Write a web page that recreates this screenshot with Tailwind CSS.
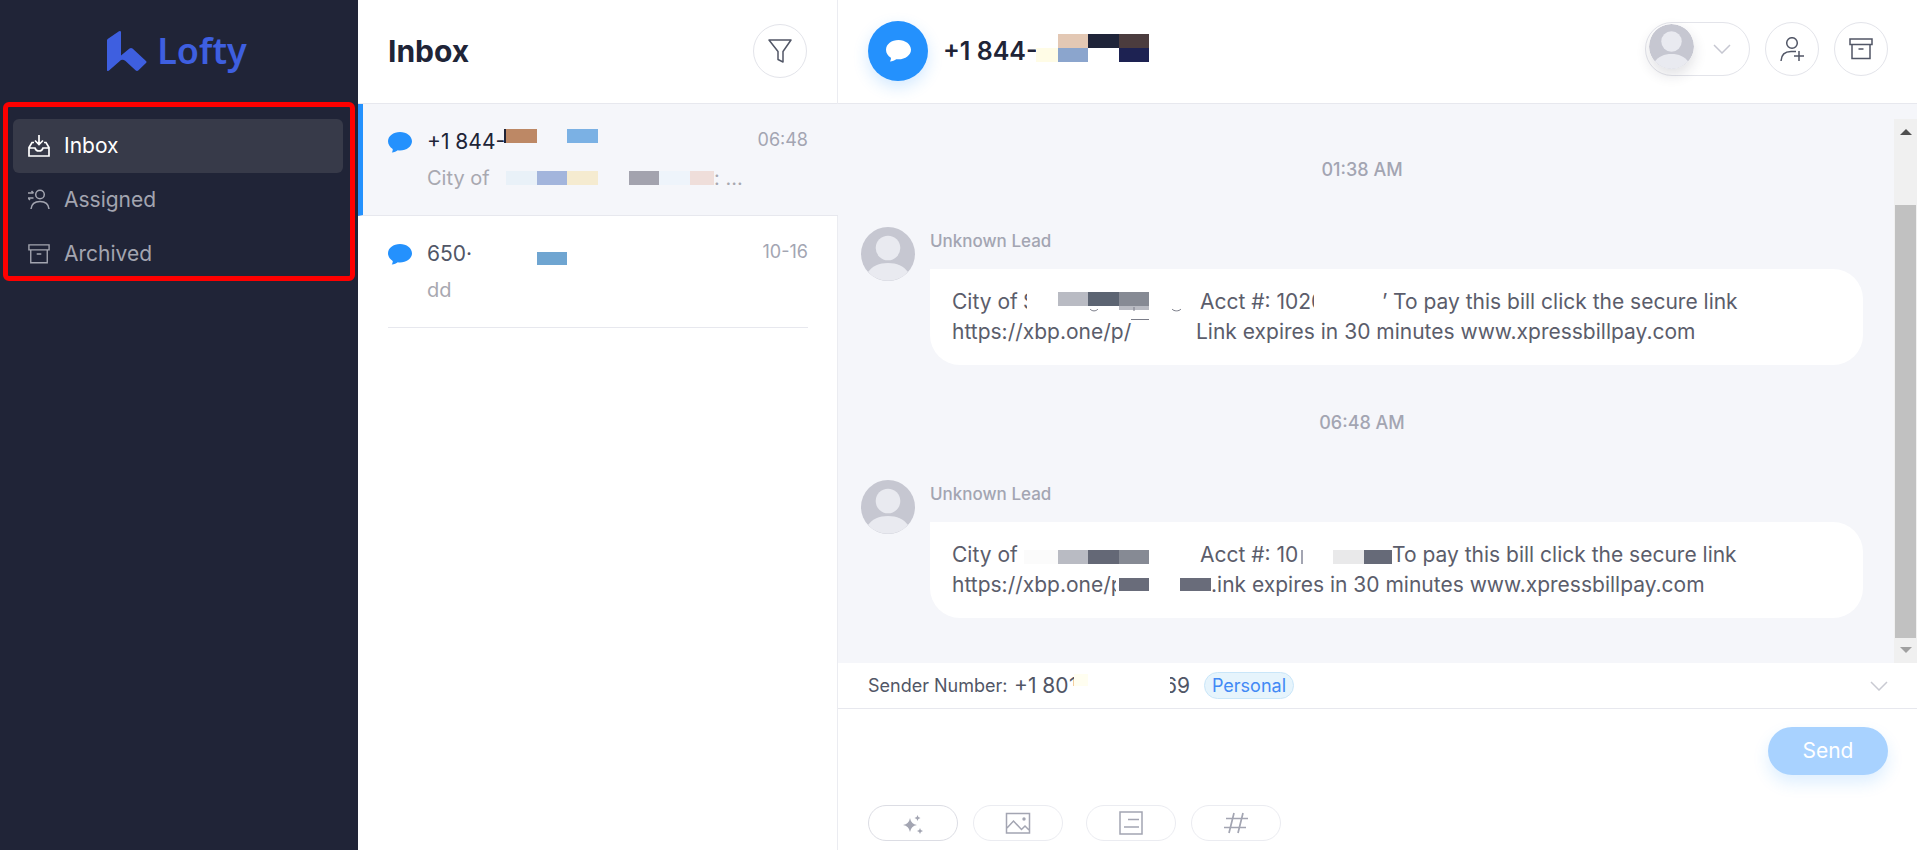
<!DOCTYPE html>
<html lang="en">
<head>
    <meta charset="UTF-8">
    <meta name="viewport" content="width=device-width, initial-scale=1.0">
    <title>Lofty Inbox</title>
    <script src="https://cdn.jsdelivr.net/npm/@tailwindcss/browser@4"></script>
</head>
<body class="flex h-screen overflow-hidden bg-white font-['Inter','Liberation_Sans',sans-serif] text-[21px] leading-[30px] text-[#515666]">

    <!-- Shared icons -->
    <svg class="hidden">
        <symbol id="bubble" viewBox="0 0 24 21">
            <path d="M12 0C5.400 0 0 4 0 9.300c0 3.200 1.900 5.900 4.700 7.600.2 1.300-.3 2.700-1 3.700 2.600-.3 4.700-1.200 6.100-2.300.7.100 1.500.2 2.200.2 6.600 0 12-4.100 12-9.200S18.600 0 12 0z" fill="currentColor"/>
        </symbol>
        <symbol id="archive" viewBox="0 0 24 24" fill="none" stroke="currentColor" stroke-width="1.500">
            <path d="M1 2h22v5.500H1zM3 7.500v14h18v-14M9.500 12h5"/>
        </symbol>
        <symbol id="avatar" viewBox="0 0 54 54">
            <circle cx="27" cy="27" r="27" fill="#c6c7d1"/>
            <circle cx="27" cy="21" r="12.300" fill="#e9eaf0"/>
            <path d="M7 45c4.500-6 11-9 20-9s15.500 3 20 9a27 27 0 0 1-40 0z" fill="#e9eaf0"/>
        </symbol>
        <symbol id="chevron" viewBox="0 0 18 10" fill="none" stroke="currentColor" stroke-width="1.500">
            <path d="M1 1l8 8 8-8"/>
        </symbol>
    </svg>

    <!-- Sidebar -->
    <aside class="flex w-[358px] shrink-0 flex-col bg-[#202437]">
        <a href="#" class="flex h-[103px] items-center justify-center gap-[10px] pb-[2px] pr-1 text-[#3e5fe0]">
            <svg class="h-10 w-10" viewBox="0 0 40 40" fill="currentColor">
                <path d="M0 9.500Q0 8.500 1 7.800L12 .3Q14 -.5 14 1.500V24.500L22.500 17.500Q24 16.500 25.500 17.500L39 30Q40 31 39 32L31.500 39.300Q30 40.500 28.500 39.300L18.500 30Q16 28 14 29L2 39.500Q0 41 0 39z"/>
            </svg>
            <span class="font-['Noto_Sans',sans-serif] text-[36px] leading-[40px] font-semibold">Lofty</span>
        </a>
        <nav class="mr-[3px] ml-[3px] -mt-px flex h-[179px] flex-col rounded-md border-[5px] border-[#fe0000] pt-3 pr-[7px] pl-[5px]">
            <a href="#" class="flex h-[54px] shrink-0 items-center gap-[14px] rounded-md bg-[#373a49] pb-px pl-[15px] text-white">
                <svg class="h-[22px] w-[22px]" viewBox="0 0 22 22" fill="none" stroke="currentColor" stroke-width="1.700">
                    <path d="M11 0v9M7 5.500l4 4 4-4M6 7.500H4L1 12.500V21h20v-8.500l-3-5h-2M1 13h6c.5 2 2 3 4 3s3.500-1 4-3h6"/>
                </svg>
                Inbox
            </a>
            <a href="#" class="flex h-[54px] shrink-0 items-center gap-[14px] pb-px pl-[15px] text-[#a3a5b0]">
                <svg class="h-[22px] w-[22px]" viewBox="0 0 22 22" fill="none" stroke="currentColor" stroke-width="1.500">
                    <circle cx="12" cy="5.500" r="4.300"/>
                    <path d="M3 20c.5-5 4-7.500 9-7.500s8.500 2.500 9 7.500M0 4h5.500M0 9h5.500M3.500 2l2 2M0 9l2 2"/>
                </svg>
                Assigned
            </a>
            <a href="#" class="flex h-[54px] shrink-0 items-center gap-[14px] pb-px pl-[15px] text-[#a3a5b0]">
                <svg class="h-[22px] w-[22px]"><use href="#archive"/></svg>
                Archived
            </a>
        </nav>
    </aside>

    <!-- Conversation list -->
    <section class="flex w-[480px] shrink-0 flex-col border-r border-[#ebecf1]">
        <header class="flex h-[104px] items-center justify-between border-b border-[#e7e8ee] pr-[30px] pb-[2px] pl-[30px]">
            <h1 class="text-[30px] font-bold text-[#202437]">Inbox</h1>
            <button type="button" aria-label="Filter" class="flex h-[54px] w-[54px] items-center justify-center rounded-full border border-[#e3e4ea] text-[#515666]">
                <svg class="h-6 w-6" viewBox="0 0 24 24" fill="none" stroke="currentColor" stroke-width="1.500" stroke-linejoin="round">
                    <path d="M1 1h22l-8 11.500V23l-5-2.500v-8z"/>
                </svg>
            </button>
        </header>

        <a href="#" class="-mr-px flex h-[112px] border-b border-l-[5px] border-b-[#e7e8ee] border-l-[#2491fd] bg-[#f5f6fa] pr-[30px] pl-[25px]">
            <svg class="mt-7 h-[21px] w-6 shrink-0 text-[#2491fd]"><use href="#bubble"/></svg>
            <div class="ml-[15px] flex-1 pt-[23px]">
                <div class="flex h-[30px] justify-between">
                    <div class="flex">
                        <span class="w-[77px] whitespace-nowrap text-[#202437]">+1 844-</span>
                        <span class="mt-[2px] h-[14px] w-[2px] bg-[#202437]"></span>
                        <span class="mt-[2px] h-[14px] w-[31px] bg-[#bd8865]"></span>
                        <span class="mt-[2px] ml-[30px] h-[14px] w-[31px] bg-[#7bb1e4]"></span>
                    </div>
                    <time class="text-[18px] leading-[26px] text-[#a3a5b2]">06:48</time>
                </div>
                <div class="mt-[6px] flex h-[30px] items-center text-[20px] text-[#a8a8b0]">
                    <span class="w-[79px]">City of</span>
                    <span class="flex h-[14px]">
                        <span class="w-[31px] bg-[#e9f1f8]"></span>
                        <span class="w-[30px] bg-[#a3b5dc]"></span>
                        <span class="w-[31px] bg-[#f5ebd0]"></span>
                        <span class="ml-[31px] w-[30px] bg-[#a3a3ae]"></span>
                        <span class="w-[31px] bg-[#eef4fb]"></span>
                        <span class="w-[24px] bg-[#efdeda]"></span>
                    </span>
                    <span>: ...</span>
                </div>
            </div>
        </a>

        <a href="#" class="mr-[29px] ml-[30px] flex h-[112px] border-b border-[#e7e8ee]">
            <svg class="mt-7 h-[21px] w-6 shrink-0 text-[#2491fd]"><use href="#bubble"/></svg>
            <div class="ml-[15px] flex-1 pt-[23px]">
                <div class="flex h-[30px] justify-between">
                    <div class="flex">
                        <span class="w-[45px] whitespace-nowrap">650·</span>
                        <span class="mt-[13px] ml-[65px] h-[13px] w-[30px] bg-[#6fa5d1]"></span>
                    </div>
                    <time class="text-[18px] leading-[26px] text-[#a3a5b2]">10-16</time>
                </div>
                <p class="mt-[6px] text-[20px] text-[#a8a8b0]">dd</p>
            </div>
        </a>
    </section>

    <!-- Conversation -->
    <main class="flex min-w-0 flex-1 flex-col">
        <header class="flex h-[104px] shrink-0 items-center border-b border-[#e7e8ee] pr-[29px] pb-[2px] pl-[30px]">
            <div class="flex h-[60px] w-[60px] items-center justify-center rounded-full bg-[#2491fd] text-white shadow-[0_6px_16px_rgba(36,145,253,0.2)]">
                <svg class="h-[22px] w-[25px]"><use href="#bubble"/></svg>
            </div>
            <h2 class="ml-[15px] w-[93px] text-[25px] font-semibold whitespace-nowrap text-[#202437]">+1 844-</h2>
            <div class="mb-[5px] grid grid-cols-[22px_30px_31px_30px] grid-rows-[14px_14px]">
                <span></span>
                <span class="bg-[#e3c8b4]"></span>
                <span class="bg-[#1f2439]"></span>
                <span class="bg-[#4b3c3e]"></span>
                <span class="bg-[#fffce6]"></span>
                <span class="bg-[#8ba5cd]"></span>
                <span></span>
                <span class="bg-[#1d2252]"></span>
            </div>
            <div class="mb-1 ml-auto flex gap-[15px] text-[#515666]">
                <button type="button" aria-label="Assignee" class="flex h-[54px] w-[105px] items-center gap-[19px] rounded-full border border-[#e3e4ea] pl-[3px]">
                    <svg class="mb-1 h-[45px] w-[45px] rounded-full shadow-[0_6px_14px_rgba(32,36,55,0.14)]"><use href="#avatar"/></svg>
                    <svg class="h-[10px] w-[18px] text-[#c6c7d1]"><use href="#chevron"/></svg>
                </button>
                <button type="button" aria-label="Add contact" class="flex h-[54px] w-[54px] items-center justify-center rounded-full border border-[#e3e4ea]">
                    <svg class="h-6 w-6" viewBox="0 0 24 24" fill="none" stroke="currentColor" stroke-width="1.500">
                        <circle cx="12" cy="6" r="5.300"/>
                        <path d="M1 24c.3-6 4-9.500 10-9.500h5M19 14v10M14 19h10"/>
                    </svg>
                </button>
                <button type="button" aria-label="Archive" class="flex h-[54px] w-[54px] items-center justify-center rounded-full border border-[#e3e4ea]">
                    <svg class="h-6 w-6"><use href="#archive"/></svg>
                </button>
            </div>
        </header>

        <div class="flex min-h-0 flex-1 bg-[#f5f6fa]">
            <div class="min-w-0 flex-1 overflow-hidden pr-[31px] pl-[23px] text-[#5b5d6b]">
                <p class="mt-[51px] h-[30px] text-center text-[18px] font-medium text-[#a3a5b2]">01:38 AM</p>
                <article class="mt-[42px] flex gap-[15px]">
                    <svg class="h-[54px] w-[54px] shrink-0"><use href="#avatar"/></svg>
                    <div class="flex-1">
                        <h3 class="h-[42px] text-[17px] leading-[28px] font-medium text-[#a3a5b2]">Unknown Lead</h3>
                        <div class="rounded-[30px] rounded-tl-none bg-white px-[22px] py-[18px] whitespace-nowrap">
                            <div class="flex h-[30px]">
                                <span class="w-[71px]">City of</span>
                                <span class="w-1 overflow-hidden">S</span>
                                <span class="relative ml-[31px] flex h-[19px] w-[142px] pt-[5px]">
                                    <span class="w-[30px] bg-[#b9bbc3]"></span>
                                    <span class="w-[31px] bg-[#5c6472]"></span>
                                    <span class="w-[30px] bg-[#868a94]"></span>
                                    <!-- Leftovers under the masked name -->
                                    <svg class="absolute top-[19px] left-0 h-[15px] w-[130px]" viewBox="0 0 130 15">
                                        <path d="M61 0h30v4H61z" fill="#b9bbc3"/>
                                        <path d="M32 3c2 2.500 6 2.500 8 0M76 1v4M114 3c2 2.500 7 2.500 9 0M73 13.500h18" fill="none" stroke="#7b7d89"/>
                                    </svg>
                                </span>
                                <span class="w-[111px]">Acct #: 102</span>
                                <span class="w-[3px] overflow-hidden">0</span>
                                <span class="ml-[68px] h-3 w-[5px] overflow-hidden text-right">’</span>
                                <span class="ml-[6px]">To pay this bill click the secure link</span>
                            </div>
                            <div class="flex h-[30px]">
                                <span class="w-[244px]">https://xbp.one/p/</span>
                                <span>Link expires in 30 minutes www.xpressbillpay.com</span>
                            </div>
                        </div>
                    </div>
                </article>

                <p class="mt-[43px] h-[30px] text-center text-[18px] font-medium text-[#a3a5b2]">06:48 AM</p>
                <article class="mt-[42px] flex gap-[15px]">
                    <svg class="h-[54px] w-[54px] shrink-0"><use href="#avatar"/></svg>
                    <div class="flex-1">
                        <h3 class="h-[42px] text-[17px] leading-[28px] font-medium text-[#a3a5b2]">Unknown Lead</h3>
                        <div class="rounded-[30px] rounded-tl-none bg-white px-[22px] py-[18px] whitespace-nowrap">
                            <div class="flex h-[30px]">
                                <span class="w-[72px]">City of</span>
                                <span class="mt-[10px] flex h-[14px] w-[176px]">
                                    <span class="w-[34px] bg-[#fbfbfb]"></span>
                                    <span class="w-[30px] bg-[#b9bbc3]"></span>
                                    <span class="w-[31px] bg-[#646876]"></span>
                                    <span class="w-[30px] bg-[#868a94]"></span>
                                </span>
                                <span class="w-[101px]">Acct #: 10</span>
                                <span class="mt-[10px] h-[14px] w-[2px] bg-[#a3a5b2]"></span>
                                <span class="mt-[10px] ml-[30px] h-[14px] w-[31px] bg-[#e9e9ea]"></span>
                                <span class="mt-[10px] h-[14px] w-[28px] bg-[#666a78]"></span>
                                <span>To pay this bill click the secure link</span>
                            </div>
                            <div class="flex h-[30px]">
                                <span class="w-[164px] overflow-hidden">https://xbp.one/p</span>
                                <span class="mt-[8px] ml-[3px] h-[13px] w-[30px] bg-[#696c7a]"></span>
                                <span class="mt-[8px] ml-[31px] h-[13px] w-[31px] bg-[#696c7a]"></span>
                                <span>.ink expires in 30 minutes www.xpressbillpay.com</span>
                            </div>
                        </div>
                    </div>
                </article>
            </div>
            <!-- Scrollbar -->
            <div class="mt-[15px] flex w-[23px] shrink-0 flex-col items-center bg-[#f0f0f0]">
                <svg class="mt-[10px] h-[6px] w-3 shrink-0" viewBox="0 0 12 6"><path d="M6 0l6 6H0z" fill="#505050"/></svg>
                <div class="mt-[70px] w-[21px] flex-1 bg-[#c1c1c1]"></div>
                <svg class="mt-[9px] mb-[10px] h-[6px] w-3 shrink-0" viewBox="0 0 12 6"><path d="M0 0h12L6 6z" fill="#a0a0a0"/></svg>
            </div>
        </div>

        <!-- Sender -->
        <div class="flex h-[46px] shrink-0 items-center border-b border-[#e7e8ee] pr-[29px] pl-[30px]">
            <span class="w-[146px] text-[18px] whitespace-nowrap">Sender Number:</span>
            <span class="w-[55px] whitespace-nowrap">+1 80</span>
            <span class="mb-[15px] h-[15px] w-[5px] overflow-hidden">1</span>
            <span class="mb-3 h-3 w-[14px] bg-[#fffef0]"></span>
            <span class="ml-[82px] flex w-[20px] justify-end overflow-hidden">69</span>
            <span class="ml-[14px] flex h-[27px] w-[90px] items-center justify-center rounded-full border border-[#c9e6f9] bg-[#e6f4fc] text-[18px] text-[#4189f5]">Personal</span>
            <button type="button" aria-label="Change sender number" class="ml-auto text-[#c9cad2]">
                <svg class="h-[10px] w-[18px]"><use href="#chevron"/></svg>
            </button>
        </div>

        <!-- Message editor -->
        <form class="flex h-[141px] shrink-0 flex-col justify-between pr-[29px] pb-[9px] pl-[30px]">
            <div class="flex pt-[18px]">
                <textarea aria-label="Message" class="h-[72px] flex-1 resize-none outline-none"></textarea>
                <button type="button" class="h-12 w-[120px] rounded-full bg-[#a8d2ff] text-white shadow-[0_8px_16px_rgba(36,145,253,0.15)]">Send</button>
            </div>
            <div class="flex gap-[15px] text-[#a3a5b2]">
                <button type="button" aria-label="Write with AI" class="flex h-9 w-[90px] items-center justify-center rounded-full border border-[#dcdde4]">
                    <svg class="mt-[3px] h-5 w-5" viewBox="0 0 20 20" fill="currentColor">
                        <path d="M7 3q1 6 7 7-6 1-7 7-1-6-7-7 6-1 7-7zM14.500 0q.3 2.700 3 3-2.700.3-3 3-.3-2.700-3-3 2.700-.3 3-3zM17 13q.3 2.700 3 3-2.700.3-3 3-.3-2.700-3-3 2.700-.3 3-3z"/>
                    </svg>
                </button>
                <button type="button" aria-label="Image" class="mr-2 flex h-9 w-[90px] items-center justify-center rounded-full border border-[#ebecf1]">
                    <svg class="h-[22px] w-[26px]" viewBox="0 0 26 22" fill="none" stroke="currentColor" stroke-width="1.500">
                        <path d="M1.500 1.500h23v19.500h-23zM2 16l6.500-7 8 8.500 3.500-3.500 4 4"/>
                        <circle cx="19" cy="7" r="1.700" fill="currentColor" stroke="none"/>
                    </svg>
                </button>
                <button type="button" aria-label="Template" class="flex h-9 w-[90px] items-center justify-center rounded-full border border-[#ebecf1]">
                    <svg class="h-6 w-6" viewBox="0 0 24 24" fill="none" stroke="currentColor" stroke-width="1.500">
                        <path d="M1 1h22v22H1zM9 8.500h11M5 16h15"/>
                    </svg>
                </button>
                <button type="button" aria-label="Insert variable" class="flex h-9 w-[90px] items-center justify-center rounded-full border border-[#ebecf1]">
                    <svg class="h-[22px] w-6" viewBox="0 0 24 22" fill="none" stroke="currentColor" stroke-width="1.700">
                        <path d="M10 1L5 21M19 1l-5 20M2 6.500h22M0 15.500h22"/>
                    </svg>
                </button>
            </div>
        </form>
    </main>

</body>
</html>
